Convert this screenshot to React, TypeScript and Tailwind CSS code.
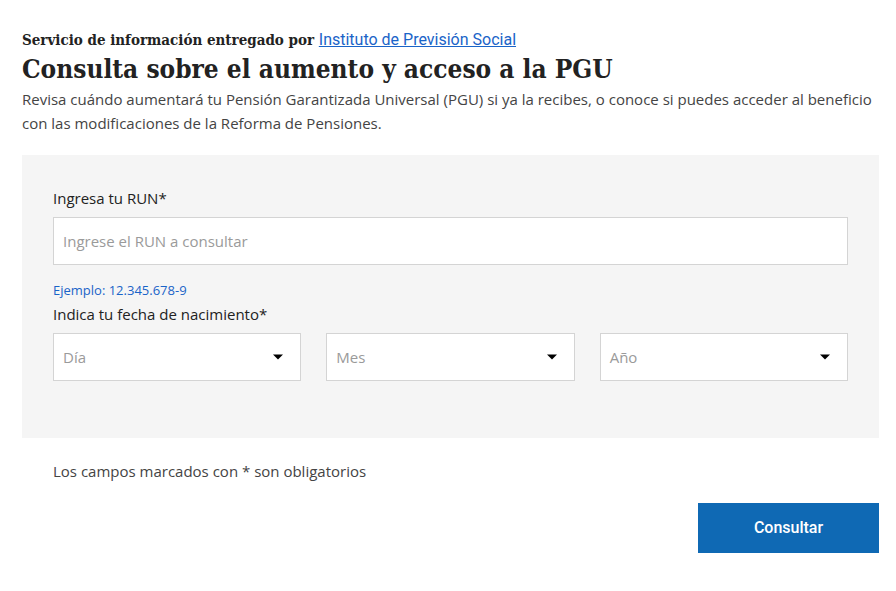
import React from 'react'

const Caret = () => (
  <svg width="10" height="6" viewBox="0 0 10 6" className="shrink-0">
    <path d="M0 0.5 L10 0.5 L5 5.5 Z" fill="#000" />
  </svg>
)

const SelectBox = ({ label }: { label: string }) => (
  <div className="flex h-[48px] flex-1 items-center justify-between border border-[#d4d4d4] bg-white pl-[9px] pr-[17px]">
    <span className="text-[15px] text-[#9a9a9a]">{label}</span>
    <Caret />
  </div>
)

const App = () => {
  return (
    <div className="min-h-[591px] w-[896px] bg-white font-['Open_Sans',sans-serif] text-[#333]">
      <div className="w-[857px] pl-[22px] pt-[31px] box-content">
        <p className="font-['DejaVu_Serif_Condensed','DejaVu_Serif',serif] text-[15px] font-bold leading-[18px] text-[#222]">
          Servicio de información entregado por{' '}
          <a href="#" className="font-['Roboto',sans-serif] text-[16px] font-normal text-[#1a64c8] underline">
            Instituto de Previsión Social
          </a>
        </p>
        <h1 className="mt-[3px] font-['DejaVu_Serif_Condensed','DejaVu_Serif',serif] text-[26px] font-bold leading-[34px] text-[#222]">
          Consulta sobre el aumento y acceso a la PGU
        </h1>
        <p className="mt-[1px] text-[15px] leading-[24px] text-[#444]">
          Revisa cuándo aumentará tu Pensión Garantizada Universal (PGU) si ya la recibes, o conoce si puedes acceder al beneficio con las modificaciones de la Reforma de Pensiones.
        </p>

        <div className="mt-[20px] h-[283px] bg-[#f5f5f5] pl-[31px] pr-[31px] pt-[33px]">
          <label className="block text-[15px] leading-[20px] text-[#222]">Ingresa tu RUN*</label>
          <div className="mt-[9px] flex h-[48px] items-center border border-[#d4d4d4] bg-white pl-[9px]">
            <span className="text-[15px] text-[#9a9a9a]">Ingrese el RUN a consultar</span>
          </div>
          <p className="mt-[17px] text-[13px] leading-[16px] text-[#1a64c8]">Ejemplo: 12.345.678-9</p>
          <label className="mt-[6px] block text-[15px] leading-[20px] text-[#222]">Indica tu fecha de nacimiento*</label>
          <div className="mt-[9px] flex gap-[25px]">
            <SelectBox label="Día" />
            <SelectBox label="Mes" />
            <SelectBox label="Año" />
          </div>
        </div>

        <p className="mt-[23px] pl-[31px] text-[15px] leading-[20px] text-[#444]">
          Los campos marcados con * son obligatorios
        </p>
        <div className="mt-[22px] flex justify-end">
          <button className="h-[50px] w-[181px] bg-[#0f69b4] font-['Roboto',sans-serif] text-[16px] font-medium text-white">
            Consultar
          </button>
        </div>
      </div>
    </div>
  )
}

export default App
